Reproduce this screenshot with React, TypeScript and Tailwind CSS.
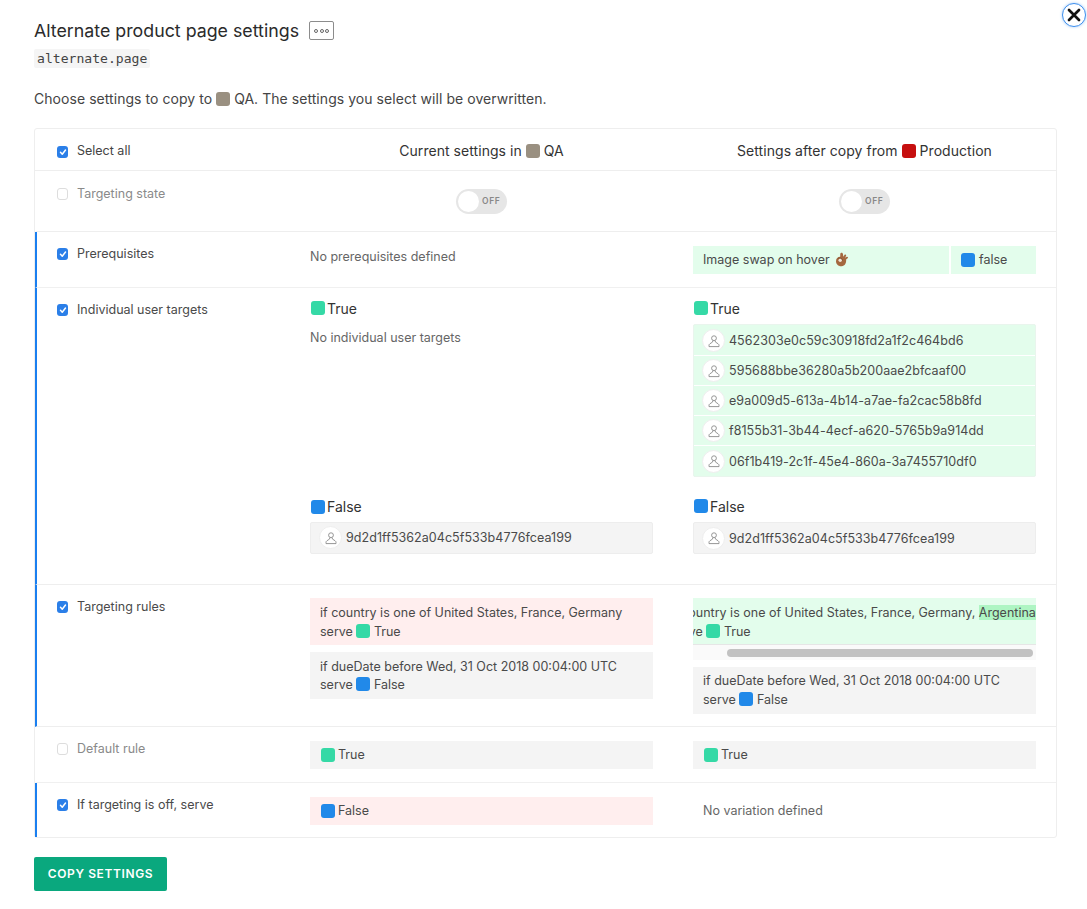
import React from "react";

const GREEN = "bg-[#35d9a6]";
const BLUE = "bg-[#2189e9]";
const TAUPE = "bg-[#9a9081]";
const RED = "bg-[#c60f0f]";

function Swatch({ color }: { color: string }) {
  return <span className={`inline-block h-[14px] w-[14px] rounded-[3px] align-[-2px] ${color}`} />;
}

function Check({ on }: { on: boolean }) {
  return on ? (
    <span className="flex h-[12px] w-[11px] shrink-0 items-center justify-center rounded-[3px] bg-[#2b7fe8]">
      <svg viewBox="0 0 12 12" className="h-[10px] w-[10px]" fill="none" stroke="#fff" strokeWidth="1.8" strokeLinecap="round" strokeLinejoin="round">
        <path d="M3 6.4 5.1 8.6 9 3.6" />
      </svg>
    </span>
  ) : (
    <span className="h-[12px] w-[11px] shrink-0 rounded-[3px] border border-[#dddddd] bg-white" />
  );
}

function Toggle() {
  return (
    <div className="flex h-[25px] w-[51px] items-center rounded-full bg-[#e6e6e6] pl-[2px]">
      <span className="h-[21px] w-[21px] rounded-full bg-white" />
      <span className="ml-[3px] text-[8.5px] font-semibold tracking-[0.6px] text-[#888888]">OFF</span>
    </div>
  );
}

function UserIcon() {
  return (
    <span className="flex h-[23px] w-[23px] shrink-0 items-center justify-center rounded-full border border-[#eeeeee] bg-white">
      <svg viewBox="0 0 14 14" className="h-[14px] w-[14px]" fill="none" stroke="#8a8a8a" strokeWidth="0.9">
        <circle cx="7" cy="4.2" r="2.4" />
        <path d="M5.8 6.6 5.6 8 2.9 9.8C2.3 10.2 2 10.7 2 11.4V12.6H12V11.4C12 10.7 11.7 10.2 11.1 9.8L8.4 8 8.2 6.6" />
      </svg>
    </span>
  );
}

function UserRow({ id, green, last }: { id: string; green?: boolean; last?: boolean }) {
  return (
    <div className={`flex h-[30px] items-center pl-[8px] ${!last && green ? "border-b border-white" : ""}`}>
      <UserIcon />
      <span className="ml-[4px] translate-y-[1px] text-[12.5px] tracking-[0.05px] text-[#4a4a4a]">{id}</span>
    </div>
  );
}

function Variation({ color, label }: { color: string; label: string }) {
  return (
    <div className="flex h-[20px] items-center gap-[2px] pl-[1px] text-[14px] text-[#333333]">
      <Swatch color={color} />
      <span>{label}</span>
    </div>
  );
}

function ValueBox({ bg, color, label }: { bg: string; color: string; label: string }) {
  return (
    <div className={`flex h-[28px] items-center gap-[3px] pl-[11px] text-[12.5px] text-[#4a4a4a] ${bg}`}>
      <Swatch color={color} />
      <span>{label}</span>
    </div>
  );
}

function Row({
  label,
  on,
  className,
  labelClass = "-mt-[2px]",
  col2,
  col3,
}: {
  label: string;
  on: boolean;
  className: string;
  labelClass?: string;
  col2: React.ReactNode;
  col3: React.ReactNode;
}) {
  return (
    <div className={`flex border-l-2 ${on ? "border-l-[#1a7ff0]" : "border-l-transparent"} ${className}`}>
      <div className={`flex h-fit w-[273px] shrink-0 items-center gap-[9px] pl-[20px] text-[12.5px] ${labelClass} ${on ? "text-[#4a4a4a]" : "text-[#8a8a8a]"}`}>
        <Check on={on} />
        <span>{label}</span>
      </div>
      <div className="w-[343px] shrink-0">{col2}</div>
      <div className="ml-[40px] w-[343px] shrink-0">{col3}</div>
    </div>
  );
}

function OkHand() {
  return (
    <svg viewBox="0 0 16 16" className="inline-block h-[16px] w-[16px] align-[-3px]">
      <path d="M7.2 .8c1 -.3 1.700 .5 1.800 1.500l.3 2.400 1.300 -1.900c.6 -.9 1.900 -.2 1.500 .9l-1 2 1.600 -.9c1 -.5 1.800 .8 .9 1.500l-1.500 1.300c.3 2.400 -.6 6.400 -4.500 6.600 -3.200 .2 -5.600 -2.100 -5.600 -5 0 -2.900 1.800 -4.300 4.200 -4.400L6.300 2.300c-.2 -.8 .2 -1.300 .9 -1.500Z" fill="#a5683f" />
      <circle cx="6.2" cy="8.3" r="1.7" fill="#f1e4d9" />
      <path d="M3.8 6.800c1.700 -1.600 4.500 -.6 4.700 1.700" stroke="#7a4a2b" strokeWidth=".8" fill="none" />
    </svg>
  );
}

const ruleText = "text-[12.5px] text-[#4a4a4a]";

export default function App() {
  return (
    <div className="relative h-[909px] w-[1087px] overflow-hidden bg-white pl-[34px] pt-[19px] font-['Inter',sans-serif] text-[#333333]">
      <button className="absolute left-[1062px] top-[3px] flex h-[24px] w-[24px] items-center justify-center rounded-full border border-[#3d8fee] bg-white shadow-[0_0_3px_#a9cdf7]">
        <svg viewBox="0 0 16 16" className="h-[16px] w-[16px]" stroke="#111111" strokeWidth="2.7" strokeLinecap="round">
          <path d="M3 3 13 13M13 3 3 13" />
        </svg>
      </button>

      <div className="flex h-[23px] items-center">
        <h1 className="text-[17.8px] font-normal leading-[23px] text-[#2b2b2b]">Alternate product page settings</h1>
        <span className="ml-[10px] flex h-[19px] w-[25px] items-center justify-center gap-[1.5px] rounded-[2px] border border-[#8c8c8c]">
          <i className="h-[4px] w-[4px] rounded-full border border-[#666666]" />
          <i className="h-[4px] w-[4px] rounded-full border border-[#666666]" />
          <i className="h-[4px] w-[4px] rounded-full border border-[#666666]" />
        </span>
      </div>

      <div className="mt-[7px] flex h-[19px] w-fit items-center rounded-[2px] bg-[#f5f5f5] px-[3px] font-['DejaVu_Sans_Mono',monospace] text-[13.1px] text-[#444444]">
        alternate.page
      </div>

      <p className="mt-[21px] h-[20px] text-[14px] leading-[20px] tracking-[0.05px] text-[#444444]">
        Choose settings to copy to <Swatch color={TAUPE} /> QA. The settings you select will be overwritten.
      </p>

      <div className="mt-[19px] w-[1023px] rounded-[3px] border border-[#eeeeee]">
        <div className="flex h-[42px] items-center border-b border-[#eeeeee] pl-[2px]">
          <div className="flex w-[273px] shrink-0 items-center gap-[9px] pl-[20px] pt-[4px] text-[12.5px] text-[#444444]">
            <Check on />
            <span>Select all</span>
          </div>
          <div className="w-[343px] shrink-0 pt-[2px] text-center text-[14px] tracking-[0.05px] text-[#333333]">
            Current settings in <Swatch color={TAUPE} /> QA
          </div>
          <div className="ml-[40px] w-[343px] shrink-0 pt-[2px] text-center text-[14px] tracking-[0.05px] text-[#333333]">
            Settings after copy from <Swatch color={RED} /> Production
          </div>
        </div>

        <Row
          label="Targeting state"
          on={false}
          className="h-[61px] border-b border-b-[#eeeeee] pt-[16px]"
          col2={<div className="flex justify-center pt-[2px]"><Toggle /></div>}
          col3={<div className="flex justify-center pt-[2px]"><Toggle /></div>}
        />

        <Row
          label="Prerequisites"
          on
          className="h-[56px] border-b border-b-[#f0f0f0] pt-[15px]"
          col2={<div className="pt-[1px] text-[12.5px] text-[#666666]">No prerequisites defined</div>}
          col3={
            <div className="-mt-[1px] flex h-[28px] gap-[2px] text-[12.5px] text-[#4a4a4a]">
              <div className="flex w-[256px] items-center gap-[4px] bg-[#e3fdec] pl-[10px]">
                <span>Image swap on hover</span>
                <OkHand />
              </div>
              <div className="flex flex-1 items-center gap-[4px] bg-[#e3fdec] pl-[10px]">
                <Swatch color={BLUE} />
                <span>false</span>
              </div>
            </div>
          }
        />

        <Row
          label="Individual user targets"
          on
          className="h-[297px] border-b border-b-[#eeeeee] pt-[15px]"
          col2={
            <div className="-mt-[5px]">
              <Variation color={GREEN} label="True" />
              <div className="mt-[11px] text-[12.5px] text-[#666666]">No individual user targets</div>
              <div className="mt-[149px]"><Variation color={BLUE} label="False" /></div>
              <div className="mt-[5px] rounded-[2px] border border-[#ededed] bg-[#f4f4f4]">
                <UserRow id="9d2d1ff5362a04c5f533b4776fcea199" last />
              </div>
            </div>
          }
          col3={
            <div className="-mt-[5px]">
              <Variation color={GREEN} label="True" />
              <div className="mt-[6px] rounded-[2px] border border-[#e9f5ed] bg-[#e3fdec] pt-[1px]">
                <UserRow green id="4562303e0c59c30918fd2a1f2c464bd6" />
                <UserRow green id="595688bbe36280a5b200aae2bfcaaf00" />
                <UserRow green id="e9a009d5-613a-4b14-a7ae-fa2cac58b8fd" />
                <UserRow green id="f8155b31-3b44-4ecf-a620-5765b9a914dd" />
                <UserRow green last id="06f1b419-2c1f-45e4-860a-3a7455710df0" />
              </div>
              <div className="mt-[19px]"><Variation color={BLUE} label="False" /></div>
              <div className="mt-[6px] rounded-[2px] border border-[#ededed] bg-[#f4f4f4]">
                <UserRow id="9d2d1ff5362a04c5f533b4776fcea199" last />
              </div>
            </div>
          }
        />

        <Row
          label="Targeting rules"
          on
          labelClass="mt-0"
          className="h-[142px] border-b border-b-[#eeeeee] pt-[13px]"
          col2={
            <div>
              <div className={`h-[47px] bg-[#ffeeee] px-[10px] py-[5px] leading-[19px] ${ruleText}`}>
                <div>if country is one of United States, France, Germany</div>
                <div>serve <Swatch color={GREEN} /> True</div>
              </div>
              <div className={`mt-[7px] h-[47px] bg-[#f4f4f4] px-[10px] py-[5.5px] leading-[18.5px] ${ruleText}`}>
                <div>if dueDate before Wed, 31 Oct 2018 00:04:00 UTC</div>
                <div>serve <Swatch color={BLUE} /> False</div>
              </div>
            </div>
          }
          col3={
            <div>
              <div className={`h-[47px] overflow-hidden whitespace-nowrap border-b border-[#e6e6e6] bg-[#e3fdec] py-[5px] leading-[19px] ${ruleText}`}>
                <div className="-ml-[23px]">if country is one of United States, France, Germany, <span className="bg-[#aef5c3]">Argentina</span></div>
                <div className="-ml-[23px]">serve <Swatch color={GREEN} /> True</div>
              </div>
              <div className="flex h-[15px] items-center bg-[#fafafa] pl-[34px] pr-[3px]">
                <div className="h-[8px] w-full rounded-full bg-[#c2c2c2]" />
              </div>
              <div className={`mt-[7px] h-[47px] bg-[#f4f4f4] px-[10px] py-[4px] leading-[19px] ${ruleText}`}>
                <div>if dueDate before Wed, 31 Oct 2018 00:04:00 UTC</div>
                <div>serve <Swatch color={BLUE} /> False</div>
              </div>
            </div>
          }
        />

        <Row
          label="Default rule"
          on={false}
          className="h-[56px] border-b border-b-[#f0f0f0] pt-[15px]"
          col2={<div className="-mt-[1px]"><ValueBox bg="bg-[#f4f4f4]" color={GREEN} label="True" /></div>}
          col3={<div className="-mt-[1px]"><ValueBox bg="bg-[#f4f4f4]" color={GREEN} label="True" /></div>}
        />

        <Row
          label="If targeting is off, serve"
          on
          className="h-[54px] pt-[15px]"
          col2={<div className="-mt-[1px]"><ValueBox bg="bg-[#ffeeee]" color={BLUE} label="False" /></div>}
          col3={<div className="pl-[10px] pt-[4px] text-[12.5px] text-[#666666]">No variation defined</div>}
        />
      </div>

      <button className="mt-[19px] flex h-[34px] w-[133px] items-center justify-center rounded-[2px] bg-[#0aa87e] text-[12px] font-semibold tracking-[0.6px] text-white">
        COPY SETTINGS
      </button>
    </div>
  );
}
